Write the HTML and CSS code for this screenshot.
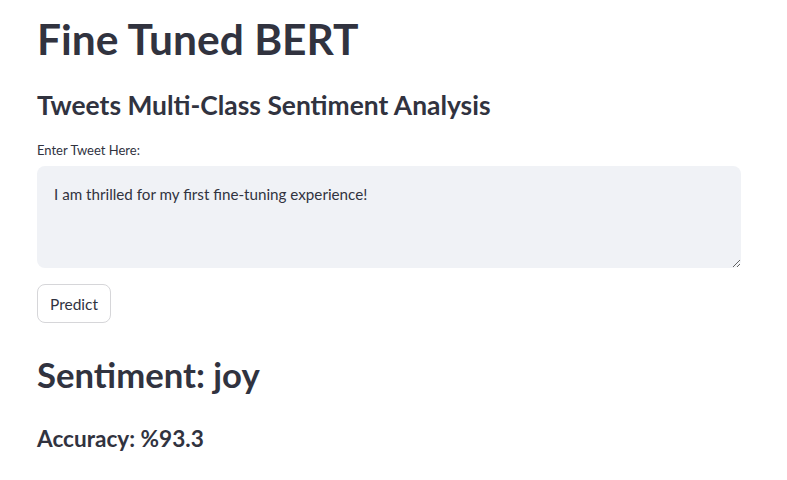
FILE: index.html
```html
<!DOCTYPE html>
<html>
<head>
<meta charset="utf-8">
<link rel="stylesheet" href="styles.css">
</head>
<body>
<main class="app">
  <h1 class="title">Fine Tuned BERT</h1>
  <h2 class="subtitle">Tweets Multi-Class Sentiment Analysis</h2>
  <label class="label" for="tweet">Enter Tweet Here:</label>
  <textarea id="tweet" class="input">I am thrilled for my first fine-tuning experience!</textarea>
  <button class="btn">Predict</button>
  <h2 class="result">Sentiment: joy</h2>
  <h3 class="accuracy">Accuracy: %93.3</h3>
</main>
</body>
</html>
```
FILE: styles.css
```css
html, body { margin: 0; padding: 0; background: #fff; }
body { font-family: Lato, "Liberation Sans", sans-serif; color: #31333f; }
.app { display: flex; flex-direction: column; align-items: flex-start; padding: 13px 46px 0 37px; width: 704px; }
.title { font-size: 42.5px; font-weight: 700; margin: 0; line-height: 52px; }
.subtitle { font-size: 26.4px; font-weight: 700; margin: 23px 0 0; line-height: 34px; }
.label { font-size: 13px; margin-top: 19px; line-height: 18px; }
.input { box-sizing: border-box; width: 704px; height: 102px; margin-top: 7px; background: #f0f2f6; border: none; border-radius: 8px; padding: 19px 17px 16px; font-family: inherit; font-size: 15.2px; color: #31333f; resize: vertical; outline: none; }
.btn { margin-top: 16px; height: 39px; padding: 0 12px; background: #fff; border: 1px solid #d6d6d9; border-radius: 8px; font-family: inherit; font-size: 15.5px; color: #31333f; }
.result { font-size: 34.7px; font-weight: 700; margin: 30px 0 0; line-height: 44px; }
.accuracy { font-size: 22.6px; font-weight: 700; margin: 27px 0 0; line-height: 30px; }
```
